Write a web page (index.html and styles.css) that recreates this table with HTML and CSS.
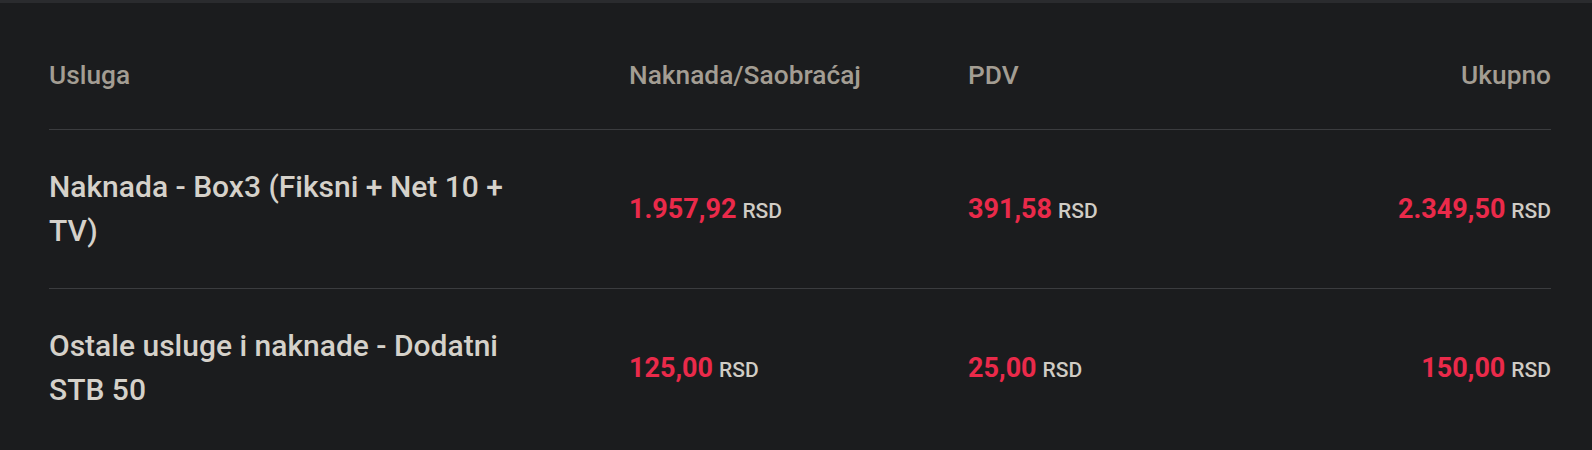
FILE: index.html
```html
<!DOCTYPE html>
<html lang="sr">
<head>
<meta charset="utf-8">
<title>Usluge</title>
<link rel="stylesheet" href="styles.css">
</head>
<body>
<div class="page">
  <div class="table">
    <div class="row head">
      <div class="cell">Usluga</div>
      <div class="cell">Naknada/Saobraćaj</div>
      <div class="cell">PDV</div>
      <div class="cell end">Ukupno</div>
    </div>
    <div class="row item">
      <div class="cell name"><span class="name-text">Naknada - Box3 (Fiksni + Net 10 + TV)</span></div>
      <div class="cell"><span class="amt">1.957,92</span> <span class="cur">RSD</span></div>
      <div class="cell"><span class="amt">391,58</span> <span class="cur">RSD</span></div>
      <div class="cell end"><span class="amt">2.349,50</span> <span class="cur">RSD</span></div>
    </div>
    <div class="row item">
      <div class="cell name"><span class="name-text">Ostale usluge i naknade - Dodatni STB 50</span></div>
      <div class="cell"><span class="amt">125,00</span> <span class="cur">RSD</span></div>
      <div class="cell"><span class="amt">25,00</span> <span class="cur">RSD</span></div>
      <div class="cell end"><span class="amt">150,00</span> <span class="cur">RSD</span></div>
    </div>
  </div>
</div>
</body>
</html>
```
FILE: styles.css
```css
html, body {
  margin: 0;
  padding: 0;
  background: #1b1c1e;
}
body {
  font-family: Roboto, "Noto Sans", "Liberation Sans", sans-serif;
  border-top: 3px solid #2a2b2e;
  height: 447px;
  overflow: hidden;
}
.page {
  padding: 0 41px 0 49px;
}
.table {
  display: flex;
  flex-direction: column;
}
.row {
  display: grid;
  grid-template-columns: 580px 339px 1fr auto;
  align-items: center;
  border-bottom: 1px solid #3b3c3f;
}
.row.item:last-child {
  border-bottom: none;
}
.head {
  padding: 50px 0 32px;
  line-height: 44px;
  font-size: 26.3px;
  font-weight: 500;
  color: #a39d93;
}
.item {
  padding: 35px 0;
  min-height: 88px;
}
.cell.end {
  text-align: right;
}
.name-text {
  display: block;
  width: 500px;
  font-size: 30px;
  line-height: 44px;
  font-weight: 500;
  color: #d5d1ca;
}
.amt {
  font-size: 27px;
  font-weight: 700;
  color: #ea2a4a;
}
.cur {
  margin-left: 2px;
  font-size: 21px;
  font-weight: 500;
  color: #d0ccc5;
}
```
